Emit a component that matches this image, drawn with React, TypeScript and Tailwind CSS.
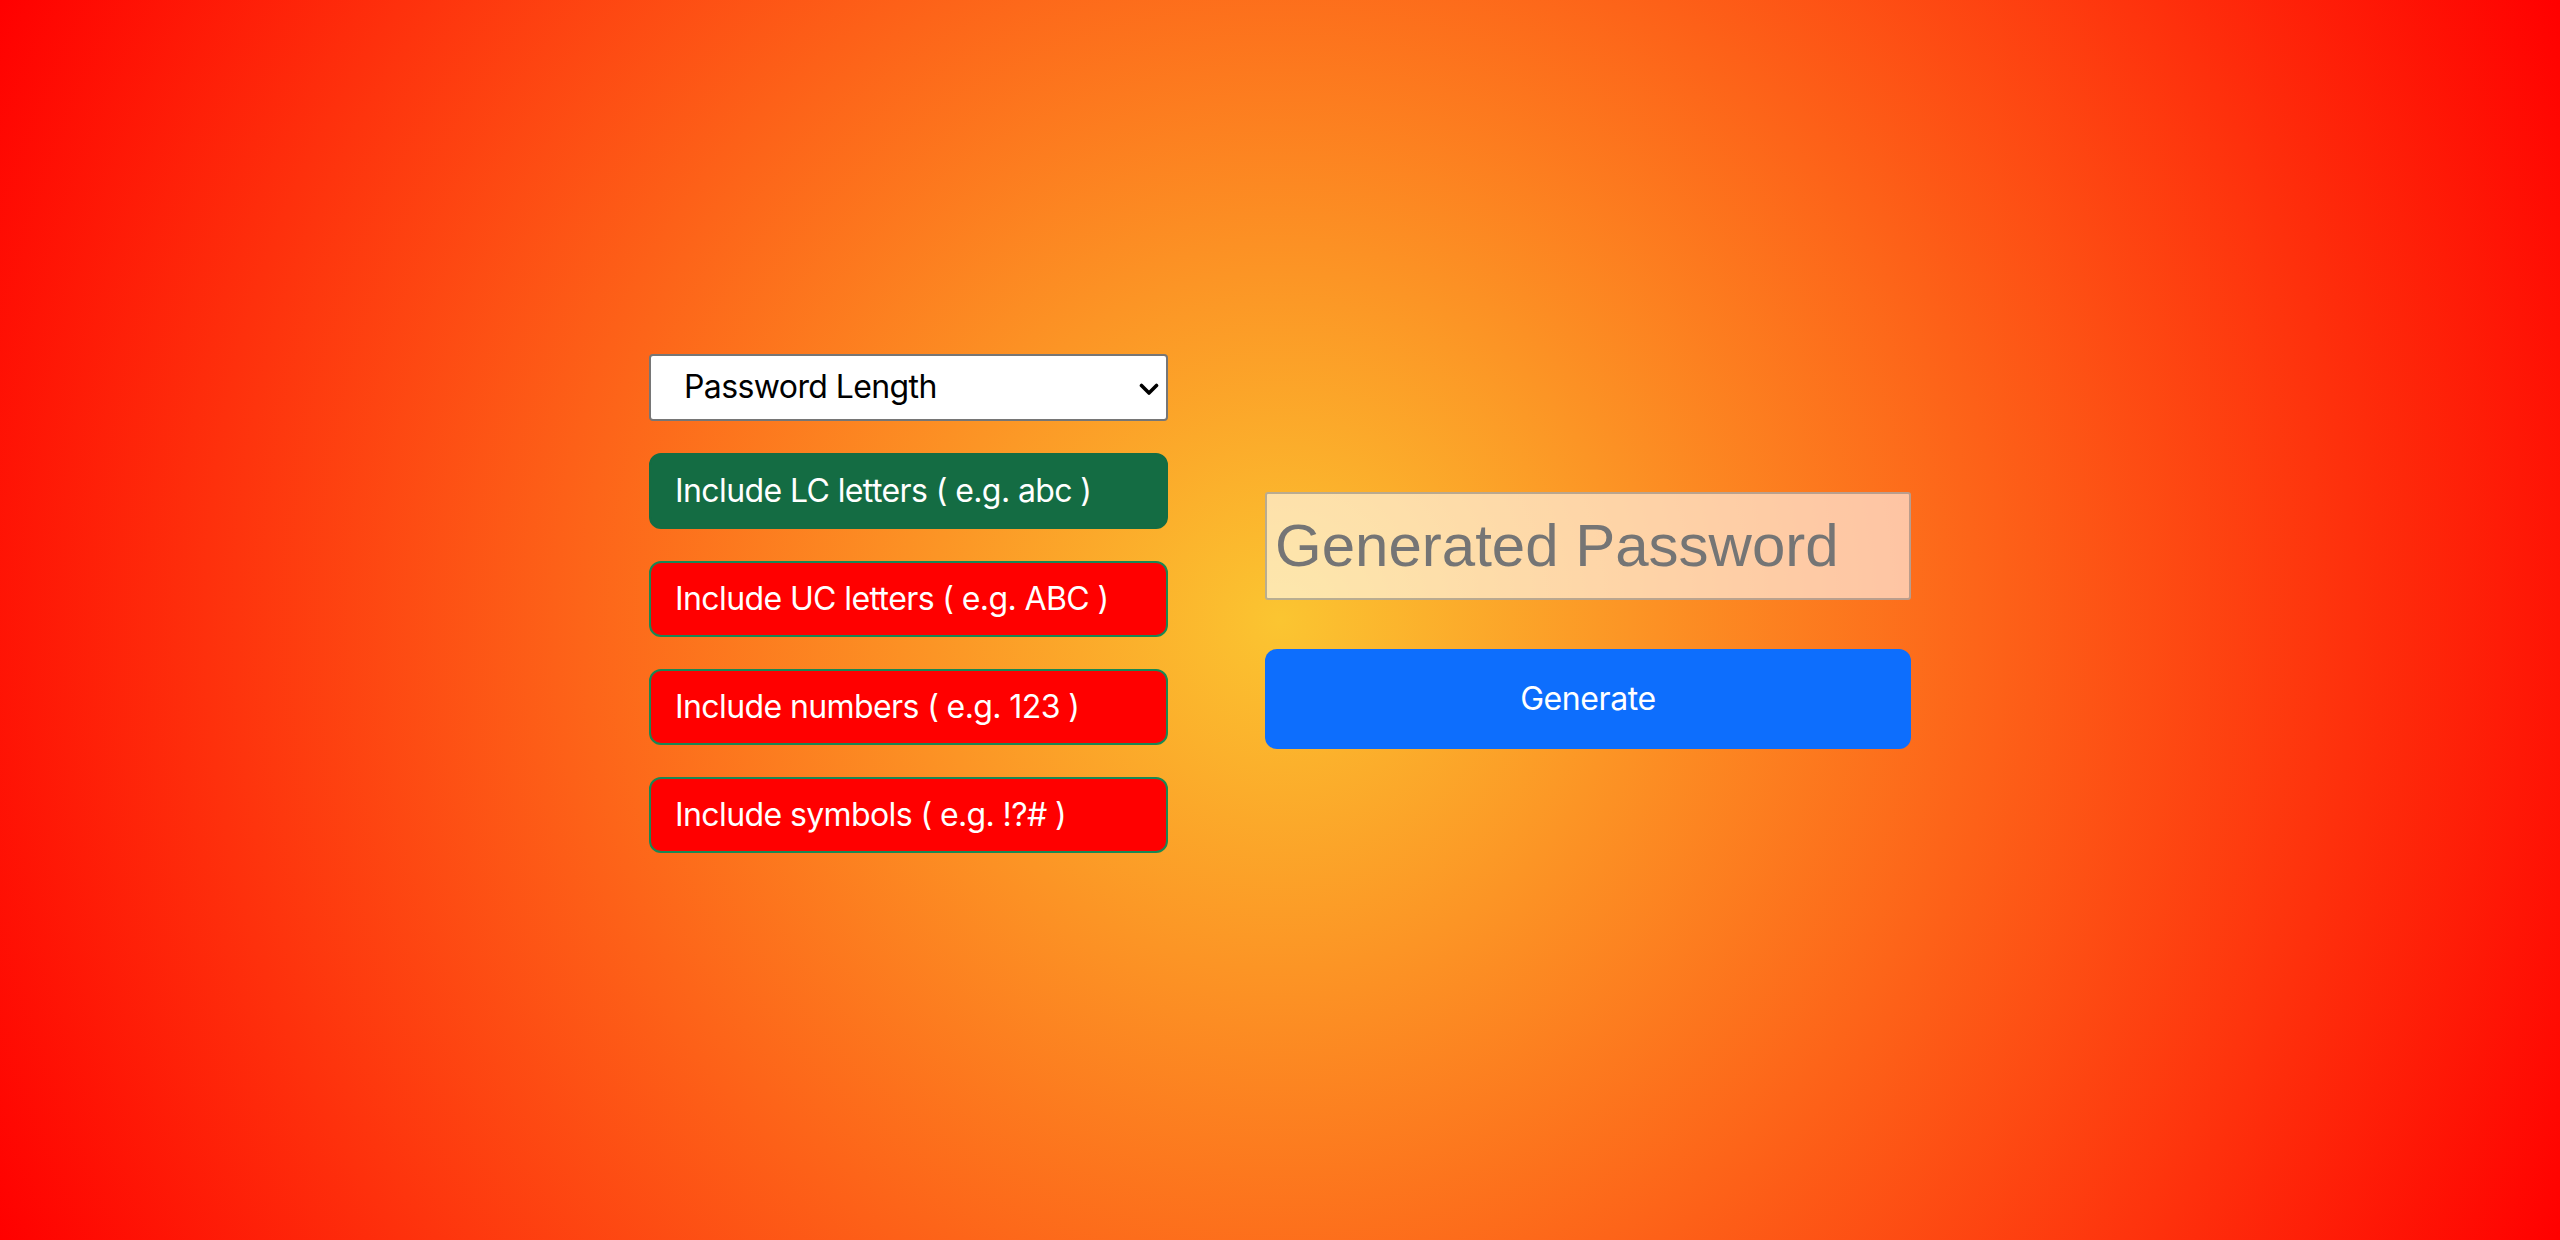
const options = [
  { label: "Include LC letters ( e.g. abc )", on: true },
  { label: "Include UC letters ( e.g. ABC )", on: false },
  { label: "Include numbers ( e.g. 123 )", on: false },
  { label: "Include symbols ( e.g. !?# )", on: false },
];

export default function App() {
  return (
    <div className="w-full h-[1240px] flex items-center justify-center bg-[radial-gradient(circle,#fbc531,#ff0000)] font-['Inter',sans-serif]">
      <div className="flex items-center gap-[97px]">
        {/* left: length + toggles */}
        <div className="w-[519px] flex flex-col gap-[32px] pb-[34px]">
          <div className="relative h-[67px] bg-white border-2 border-[#767676] rounded-[4px] flex items-center pl-[33px] pr-[24px]">
            <span className="text-[32px] text-black leading-none tracking-[-0.6px]">Password Length</span>
            <svg className="absolute right-[7px] top-[27px]" width="20" height="14" viewBox="0 0 20 14" fill="none">
              <polyline points="2.5,2.5 10,10 17.5,2.5" stroke="#000" strokeWidth="3.6" strokeLinecap="round" strokeLinejoin="round" />
            </svg>
          </div>
          {options.map((o) => (
            <button
              key={o.label}
              className={
                o.on
                  ? "h-[76px] w-full text-left px-[24px] border-2 border-[#146c43] bg-[#146c43] rounded-[12px] text-white text-[32px] tracking-[-0.6px]"
                  : "h-[76px] w-full text-left px-[24px] border-2 border-[#198754] bg-[#ff0000] rounded-[12px] text-white text-[32px] tracking-[-0.6px]"
              }
            >
              {o.label}
            </button>
          ))}
        </div>

        {/* right: output + generate */}
        <div className="w-[646px] flex flex-col">
          <div className="h-[108px] bg-white/60 border-2 border-[#767676]/50 rounded-[3px] flex items-center pl-[8px]">
            <span className="text-[60px] text-[#757575] font-['Liberation_Sans',Arial,sans-serif] leading-none">
              Generated Password
            </span>
          </div>
          <button className="mt-[49px] h-[100px] w-full bg-[#0d6efd] rounded-[12px] text-white text-[32px] tracking-[-0.4px]">
            Generate
          </button>
        </div>
      </div>
    </div>
  );
}
